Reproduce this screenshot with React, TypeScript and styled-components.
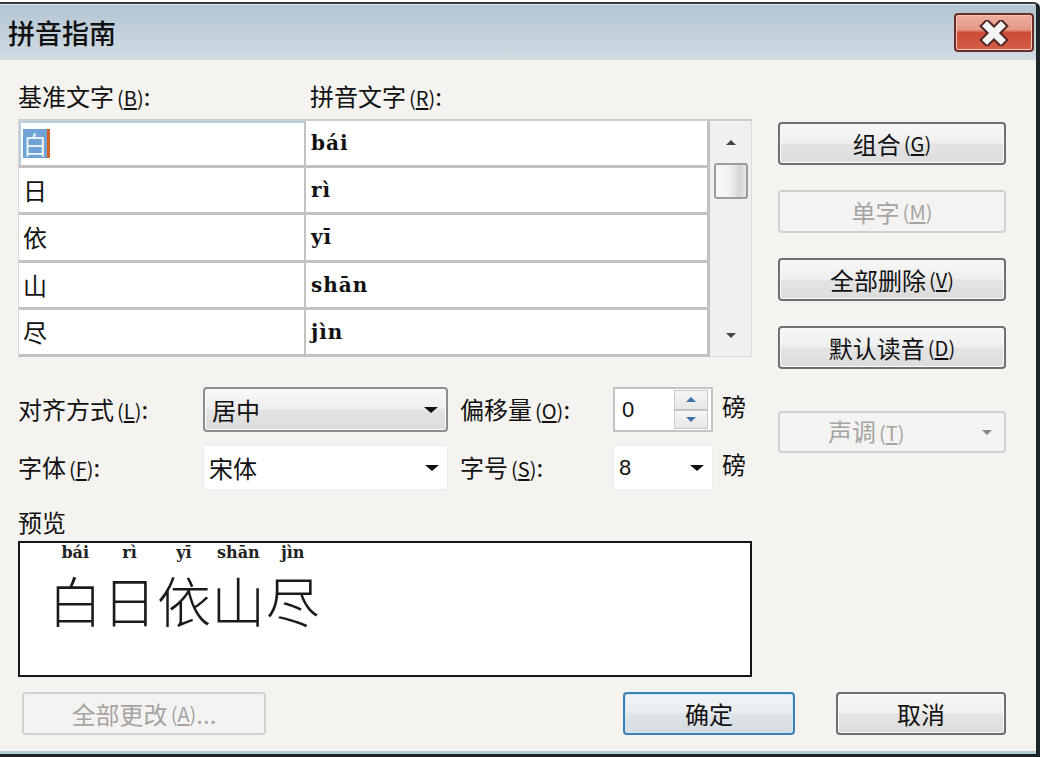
import React from 'react';
import styled, { createGlobalStyle, css } from 'styled-components';

const CJK = `"Noto Sans CJK SC", "Liberation Sans", sans-serif`;
const SLAB = `"DejaVu Serif", "Liberation Serif", serif`;

const GlobalStyle = createGlobalStyle`
  html, body {
    margin: 0;
    padding: 0;
    background: #ffffff;
  }
  body {
    font-family: ${CJK};
    color: #111;
  }
  * {
    box-sizing: border-box;
  }
`;

const rows = [
  { base: '白', ruby: 'bái' },
  { base: '日', ruby: 'rì' },
  { base: '依', ruby: 'yī' },
  { base: '山', ruby: 'shān' },
  { base: '尽', ruby: 'jìn' },
];

const Window = styled.div`
  width: 1040px;
  height: 755px;
  margin-top: 2px;
  display: flex;
  flex-direction: column;
  background: #f5f3f0;
  border-top: 2px solid #3a3a3a;
  border-right: 4px solid #1c2528;
  border-bottom: 3px solid #1e2225;
  border-top-right-radius: 6px;
  overflow: hidden;
`;

const TitleBar = styled.div`
  height: 56px;
  flex: none;
  display: flex;
  align-items: center;
  justify-content: space-between;
  padding: 0 2px 0 8px;
  background: linear-gradient(#b3c5d3, #c4d2dc 55%, #d2dde4);
  border-top: 1px solid #e4ebf0;
  font-size: 27px;
  line-height: 30px;
  font-weight: 500;
  color: #111;
`;

const CloseButton = styled.div`
  width: 80px;
  height: 39px;
  display: flex;
  align-items: center;
  justify-content: center;
  border: 2px solid #6a2e26;
  border-radius: 4px;
  background: linear-gradient(#eeae9f 0%, #e59a88 42%, #cd4a34 50%, #d45f48 100%);
  box-shadow: inset 0 0 0 1px #f4c6bb;
`;

const Body = styled.div`
  flex: 1;
  display: flex;
  flex-direction: column;
  padding: 20px 30px 0 18px;
  border-bottom: 3px solid #b6ccd5;
`;

const Main = styled.div`
  display: grid;
  grid-template-columns: 734px 228px;
  column-gap: 26px;
`;

const LeftColumn = styled.div`
  display: flex;
  flex-direction: column;
`;

const RightColumn = styled.div`
  display: flex;
  flex-direction: column;
  padding-top: 42px;
`;

const HeaderRow = styled.div`
  height: 39px;
  display: grid;
  grid-template-columns: 292px 1fr;
  font-size: 24px;
  line-height: 32px;
`;

const Key = styled.span`
  font-size: 20px;
  margin-left: 3px;
  & u {
    text-underline-offset: 2px;
  }
`;

const Table = styled.div`
  height: 238px;
  display: grid;
  grid-template-columns: 287px 1fr 42px;
  grid-template-rows: repeat(5, 1fr);
  border-top: 2px solid #cfcdcb;
  border-left: 1px solid #d9d7d5;
`;

const Cell = styled.div<{ $pinyin?: boolean; $focused?: boolean }>`
  display: flex;
  align-items: center;
  background: #ffffff;
  border-bottom: 3px solid #c4c2c0;
  border-right: 2px solid #c4c2c0;
  padding-left: 4px;
  font-size: 24px;
  line-height: 30px;
  ${(p) =>
    p.$pinyin &&
    css`
      border-right-width: 3px;
      padding-left: 5px;
      font-family: ${SLAB};
      font-weight: bold;
      font-size: 20px;
      letter-spacing: 1px;
    `}
  ${(p) =>
    p.$focused &&
    css`
      box-shadow: inset 0 2px 0 #b8cfe2, inset 2px 0 0 #b8cfe2;
    `}
`;

const Selected = styled.span`
  display: inline-block;
  background: #6fa3d6;
  color: #eef5fb;
  line-height: 29px;
  border-right: 3px solid #d3612c;
`;

const ScrollTrack = styled.div`
  grid-column: 3;
  grid-row: 1 / -1;
  display: flex;
  flex-direction: column;
  align-items: center;
  background: #f1f0ee;
  border-right: 1px solid #dedcda;
  border-bottom: 1px solid #dedcda;
`;

const Arrow = styled.div<{ $dir: 'up' | 'down'; $color?: string; $size?: number }>`
  width: 0;
  height: 0;
  border-left: ${(p) => p.$size ?? 6}px solid transparent;
  border-right: ${(p) => p.$size ?? 6}px solid transparent;
  ${(p) =>
    p.$dir === 'up'
      ? css`
          border-bottom: ${Math.round((p.$size ?? 6) * 0.9)}px solid ${p.$color ?? '#333'};
        `
      : css`
          border-top: ${Math.round((p.$size ?? 6) * 0.9)}px solid ${p.$color ?? '#333'};
        `}
`;

const ScrollArrowBox = styled.div`
  height: 42px;
  width: 100%;
  display: flex;
  align-items: center;
  justify-content: center;
`;

const Thumb = styled.div`
  width: 34px;
  height: 36px;
  border: 2px solid #9c9c9c;
  border-radius: 3px;
  background: linear-gradient(90deg, #fafafa, #f0f0f0 45%, #d6d6d6 80%, #e8e8e8);
`;

const Spacer = styled.div`
  flex: 1;
`;

const Options = styled.div`
  margin-top: 30px;
  display: grid;
  grid-template-columns: 185px 245px 165px 100px auto;
  grid-auto-rows: 45px;
  row-gap: 13px;
  align-items: center;
  font-size: 24px;
  line-height: 30px;
`;

const SecondLabel = styled.div`
  padding-left: 12px;
`;

const Unit = styled.div`
  padding-left: 9px;
  align-self: start;
  padding-top: 4px;
`;

const Field = styled.div<{ $variant: 'raised' | 'flat' | 'box' }>`
  height: 45px;
  display: flex;
  align-items: center;
  justify-content: space-between;
  padding: 0 8px 0 7px;
  background: #ffffff;
  font-size: 24px;
  ${(p) =>
    p.$variant === 'raised' &&
    css`
      border: 2px solid #8d8d8d;
      border-radius: 4px;
      background: linear-gradient(#f8f8f8, #eeeeee 48%, #e3e3e3 52%, #dcdcdc);
      box-shadow: inset 0 0 0 1px #fbfbfb;
    `}
  ${(p) =>
    p.$variant === 'flat' &&
    css`
      border: 1px solid #efedeb;
      padding-left: 5px;
    `}
  ${(p) =>
    p.$variant === 'box' &&
    css`
      border: 2px solid #c6c4c2;
      padding-right: 3px;
    `}
`;

const NumberText = styled.span`
  font-family: "Liberation Sans", sans-serif;
  font-size: 22px;
`;

const SpinButtons = styled.div`
  width: 34px;
  height: 39px;
  display: flex;
  flex-direction: column;
  border: 1px solid #c9c9c9;
`;

const SpinHalf = styled.div`
  flex: 1;
  display: flex;
  align-items: center;
  justify-content: center;
  background: linear-gradient(#f7f7f7, #e6e6e6);
  & + & {
    border-top: 2px solid #c2c2c2;
  }
`;

const PreviewLabel = styled.div`
  height: 51px;
  display: flex;
  align-items: flex-end;
  padding-bottom: 4px;
  font-size: 24px;
  line-height: 30px;
`;

const Preview = styled.div`
  height: 136px;
  border: 2px solid #161616;
  background: #ffffff;
  padding: 1px 0 0 28px;
  display: flex;
  align-items: flex-start;
`;

const RubyColumn = styled.div`
  width: 54.4px;
  display: flex;
  flex-direction: column;
  align-items: center;
`;

const RubyText = styled.span`
  font-family: ${SLAB};
  font-weight: bold;
  font-size: 16px;
  line-height: 17px;
  color: #222;
`;

const RubyBase = styled.span`
  font-size: 54px;
  line-height: 78px;
  color: #1a1a1a;
  font-weight: 300;
`;

const Button = styled.div<{ $disabled?: boolean; $default?: boolean; $width?: number }>`
  height: 43px;
  width: ${(p) => (p.$width ? `${p.$width}px` : '100%')};
  flex: none;
  display: flex;
  align-items: center;
  justify-content: center;
  font-size: 24px;
  line-height: 30px;
  color: #111;
  border: 2px solid #6f6f6f;
  border-radius: 4px;
  background: linear-gradient(#f6f6f6, #efefef 48%, #e4e4e4 52%, #dcdcdc);
  box-shadow: inset 0 0 0 1px #fbfbfb;
  ${(p) =>
    p.$disabled &&
    css`
      color: #a6a4a2;
      border-color: #d3d1cf;
      background: #f4f3f1;
      box-shadow: none;
    `}
  ${(p) =>
    p.$default &&
    css`
      border-color: #3d80b3;
      background: linear-gradient(#f2f5f7, #e8ecef 48%, #dde3e7 52%, #d6dde2);
      box-shadow: inset 0 0 0 1px #cfe6f5;
    `}
`;

const ButtonStack = styled.div`
  display: flex;
  flex-direction: column;
  gap: 25px;
`;

const ToneSelect = styled.div`
  margin-top: 42px;
  height: 42px;
  display: flex;
  align-items: center;
  justify-content: space-between;
  padding: 0 12px 0 48px;
  border: 2px solid #d3d1cf;
  border-radius: 4px;
  background: #f4f3f1;
  color: #a6a4a2;
  font-size: 24px;
  line-height: 30px;
`;

const Footer = styled.div`
  margin-top: 15px;
  display: flex;
  align-items: center;
  gap: 41px;
  padding-left: 4px;
`;

const AccessKey = ({ k }: { k: string }) => (
  <Key>
    (<u>{k}</u>)
  </Key>
);

const CloseIcon = () => (
  <svg width="32" height="26" viewBox="0 0 32 26">
    <path d="M9 6 L23 20 M23 6 L9 20" stroke="#4e2622" strokeWidth="11" strokeLinecap="square" />
    <path d="M9 6 L23 20 M23 6 L9 20" stroke="#f4f4f4" strokeWidth="7" strokeLinecap="square" />
  </svg>
);

export default function App() {
  return (
    <>
      <GlobalStyle />
      <Window>
        <TitleBar>
          <span>拼音指南</span>
          <CloseButton>
            <CloseIcon />
          </CloseButton>
        </TitleBar>
        <Body>
          <Main>
            <LeftColumn>
              <HeaderRow>
                <span>
                  基准文字<AccessKey k="B" />:
                </span>
                <span>
                  拼音文字<AccessKey k="R" />:
                </span>
              </HeaderRow>
              <Table>
                {rows.map((r, i) => (
                  <React.Fragment key={r.base}>
                    <Cell style={{ gridRow: i + 1, gridColumn: 1 }} $focused={i === 0}>
                      {i === 0 ? <Selected>{r.base}</Selected> : r.base}
                    </Cell>
                    <Cell style={{ gridRow: i + 1, gridColumn: 2 }} $pinyin>
                      {r.ruby}
                    </Cell>
                  </React.Fragment>
                ))}
                <ScrollTrack>
                  <ScrollArrowBox>
                    <Arrow $dir="up" $size={5} $color="#444" />
                  </ScrollArrowBox>
                  <Thumb />
                  <Spacer />
                  <ScrollArrowBox>
                    <Arrow $dir="down" $size={5} $color="#444" />
                  </ScrollArrowBox>
                </ScrollTrack>
              </Table>
              <Options>
                <span>
                  对齐方式<AccessKey k="L" />:
                </span>
                <Field $variant="raised">
                  <span>居中</span>
                  <Arrow $dir="down" $size={7} $color="#111" />
                </Field>
                <SecondLabel>
                  偏移量<AccessKey k="O" />:
                </SecondLabel>
                <Field $variant="box">
                  <NumberText>0</NumberText>
                  <SpinButtons>
                    <SpinHalf>
                      <Arrow $dir="up" $size={5} $color="#3f73ad" />
                    </SpinHalf>
                    <SpinHalf>
                      <Arrow $dir="down" $size={5} $color="#3f73ad" />
                    </SpinHalf>
                  </SpinButtons>
                </Field>
                <Unit>磅</Unit>

                <span>
                  字体<AccessKey k="F" />:
                </span>
                <Field $variant="flat">
                  <span>宋体</span>
                  <Arrow $dir="down" $size={7} $color="#111" />
                </Field>
                <SecondLabel>
                  字号<AccessKey k="S" />:
                </SecondLabel>
                <Field $variant="flat">
                  <NumberText>8</NumberText>
                  <Arrow $dir="down" $size={7} $color="#111" />
                </Field>
                <Unit>磅</Unit>
              </Options>
              <PreviewLabel>预览</PreviewLabel>
              <Preview>
                {rows.map((r) => (
                  <RubyColumn key={r.base}>
                    <RubyText>{r.ruby}</RubyText>
                    <RubyBase>{r.base}</RubyBase>
                  </RubyColumn>
                ))}
              </Preview>
            </LeftColumn>
            <RightColumn>
              <ButtonStack>
                <Button>
                  组合<AccessKey k="G" />
                </Button>
                <Button $disabled>
                  单字<AccessKey k="M" />
                </Button>
                <Button>
                  全部删除<AccessKey k="V" />
                </Button>
                <Button>
                  默认读音<AccessKey k="D" />
                </Button>
              </ButtonStack>
              <ToneSelect>
                <span>
                  声调<AccessKey k="T" />
                </span>
                <Arrow $dir="down" $size={5} $color="#8a8886" />
              </ToneSelect>
            </RightColumn>
          </Main>
          <Footer>
            <Button $disabled $width={244}>
              全部更改 <AccessKey k="A" />...
            </Button>
            <Spacer />
            <Button $default $width={172}>
              确定
            </Button>
            <Button $width={170}>取消</Button>
          </Footer>
        </Body>
      </Window>
    </>
  );
}
